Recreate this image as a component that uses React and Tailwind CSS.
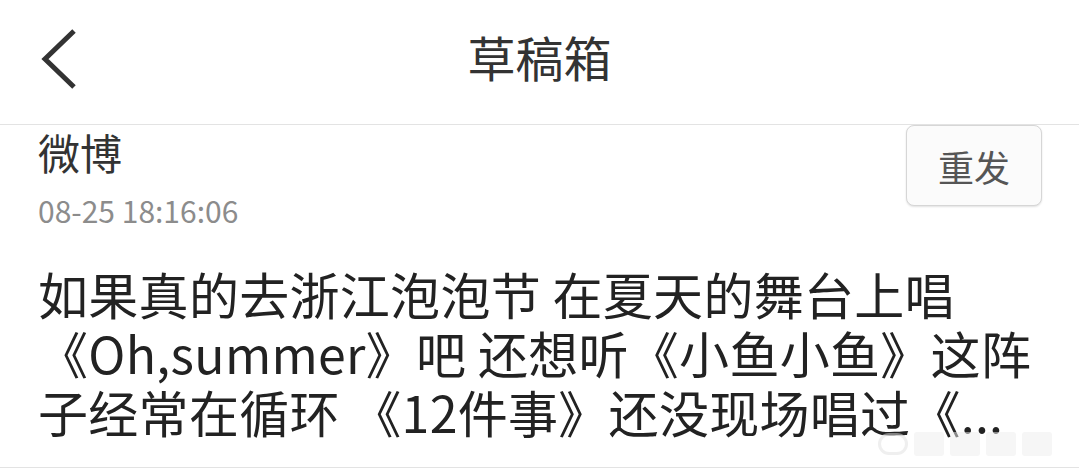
const FONT = { fontFamily: '"Noto Sans CJK SC", "Noto Sans", sans-serif' };

const BackIcon = () => (
  <svg width="40" height="64" viewBox="0 0 40 64" fill="none">
    <path d="M34 4 L5 32 L34 60" stroke="#333" strokeWidth="5" strokeLinecap="butt" strokeLinejoin="miter" />
  </svg>
);

export default function App() {
  return (
    <div className="relative w-[1079px] h-[472px] bg-white overflow-hidden" style={FONT}>
      {/* Header */}
      <div className="relative h-[125px] border-b border-[#e3e3e3] flex items-center justify-center">
        <div className="absolute left-[40px] top-[27px]">
          <BackIcon />
        </div>
        <div className="text-[48px] leading-none text-[#333] -mt-[12px]">草稿箱</div>
      </div>

      {/* Draft item */}
      <div className="border-b border-[#e3e3e3] pl-[38px] pr-[37px] pb-[26px]">
        <div className="flex justify-between items-start">
          <div className="flex flex-col">
            <div className="mt-[3px] text-[42px] leading-[48px] text-[#333]">微博</div>
            <div className="mt-[17px] text-[30px] leading-[34px] text-[#8c8c8c]">08-25 18:16:06</div>
          </div>
          <button className="w-[136px] h-[81px] rounded-[8px] border border-[#d6d6d6] bg-[#fbfbfb] shadow-[0_1px_2px_rgba(0,0,0,0.12)] text-[36px] text-[#555] flex items-center justify-center">
            重发
          </button>
        </div>
        <div className="mt-[37px] text-[50px] leading-[59px] text-[#222] whitespace-nowrap tracking-[0.3px]">
          如果真的去浙江泡泡节 在夏天的舞台上唱<br />
          《Oh,summer》吧 还想听《小鱼小鱼》这阵<br />
          子经常在循环 《12件事》还没现场唱过《...
        </div>
      </div>

      {/* faint watermark */}
      <div className="absolute left-[878px] top-[432px] flex items-center gap-[6px] opacity-50">
        <div className="w-[30px] h-[22px] rounded-full border-[3px] border-[#e0e0e0]" />
        <div className="w-[30px] h-[24px] bg-[#eeeeee] rounded-[3px]" />
        <div className="w-[30px] h-[24px] bg-[#eeeeee] rounded-[3px]" />
        <div className="w-[30px] h-[24px] bg-[#eeeeee] rounded-[3px]" />
        <div className="w-[30px] h-[24px] bg-[#eeeeee] rounded-[3px]" />
      </div>
    </div>
  );
}
